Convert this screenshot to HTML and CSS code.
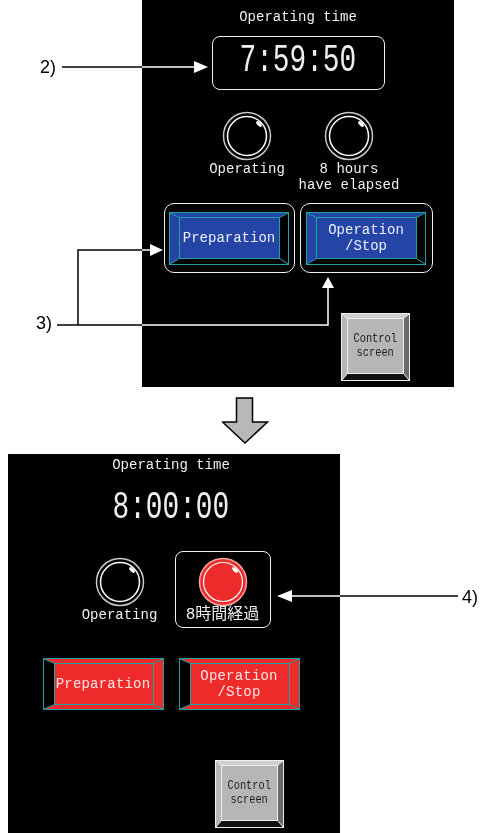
FILE: index.html
```html
<!DOCTYPE html>
<html lang="en">
<head>
    <meta charset="UTF-8">
    <meta name="viewport" content="width=device-width, initial-scale=1.0">
    <title>Operating time screen</title>
    <link rel="stylesheet" href="styles.css">
</head>
<body>

<div class="sheet">

    <!-- Screen before 8 hours -->
    <section class="screen screen--before">
        <div class="caption">Operating time</div>
        <div class="clock clock--boxed"><span class="clock-digits">7:59:50</span></div>

        <div class="lamps">
            <div class="lamp-cell">
                <svg class="lamp" width="50" height="50" viewBox="0 0 50 50">
                    <circle cx="25" cy="25" r="23.5" fill="none" stroke="#c8c8c8" stroke-width="1.5"/>
                    <circle cx="25" cy="25" r="19.5" fill="none" stroke="#fff" stroke-width="1.5"/>
                    <ellipse cx="37" cy="13" rx="1.8" ry="3.6" transform="rotate(-45 37 13)" fill="#fff"/>
                </svg>
                <div class="lamp-label">Operating</div>
            </div>
            <div class="lamp-cell">
                <svg class="lamp" width="50" height="50" viewBox="0 0 50 50">
                    <circle cx="25" cy="25" r="23.5" fill="none" stroke="#c8c8c8" stroke-width="1.5"/>
                    <circle cx="25" cy="25" r="19.5" fill="none" stroke="#fff" stroke-width="1.5"/>
                    <ellipse cx="37" cy="13" rx="1.8" ry="3.6" transform="rotate(-45 37 13)" fill="#fff"/>
                </svg>
                <div class="lamp-label">8 hours<br>have elapsed</div>
            </div>
        </div>

        <div class="switches">
            <div class="switch-frame">
                <div class="bevel bevel--blue">
                    <svg class="bevel-art" width="120" height="53" viewBox="0 0 120 53">
                        <rect width="120" height="53" fill="#2445a6"/>
                        <polygon points="120,0 120,53 110.5,46.5 110.5,5.5" fill="#000"/>
                        <polygon points="0,53 10.5,46.5 110.5,46.5 120,53" fill="#000"/>
                        <g stroke="#1fa3a3" fill="none">
                            <rect x=".5" y=".5" width="119" height="52"/>
                            <rect x="10.5" y="5.5" width="100" height="41"/>
                            <path d="M1 1 10.5 5.5M119 1 110.5 5.5M1 52 10.5 46.5M119 52 110.5 46.5"/>
                        </g>
                    </svg>
                    <span class="bevel-text">Preparation</span>
                </div>
            </div>
            <div class="switch-frame switch-frame--wide">
                <div class="bevel bevel--blue">
                    <svg class="bevel-art" width="120" height="53" viewBox="0 0 120 53">
                        <rect width="120" height="53" fill="#2445a6"/>
                        <polygon points="120,0 120,53 110.5,46.5 110.5,5.5" fill="#000"/>
                        <polygon points="0,53 10.5,46.5 110.5,46.5 120,53" fill="#000"/>
                        <g stroke="#1fa3a3" fill="none">
                            <rect x=".5" y=".5" width="119" height="52"/>
                            <rect x="10.5" y="5.5" width="100" height="41"/>
                            <path d="M1 1 10.5 5.5M119 1 110.5 5.5M1 52 10.5 46.5M119 52 110.5 46.5"/>
                        </g>
                    </svg>
                    <span class="bevel-text">Operation<br>/Stop</span>
                </div>
            </div>
        </div>

        <div class="bevel ctrl ctrl--before">
            <svg class="bevel-art" width="69" height="68" viewBox="0 0 69 68">
                <rect width="69" height="68" fill="#b6b6b6"/>
                <polygon points="0,0 69,0 63,5 6,5" fill="#cfcfcf"/>
                <polygon points="69,0 69,68 63,61 63,5" fill="#6a6a6a"/>
                <polygon points="0,68 6,61 63,61 69,68" fill="#111"/>
                <g stroke="#eee" fill="none">
                    <rect x=".5" y=".5" width="68" height="67"/>
                    <rect x="6.5" y="5.5" width="56" height="55"/>
                    <path d="M1 1 6.5 5.5M68 1 62.5 5.5M1 67 6.5 60.5M68 67 62.5 60.5"/>
                </g>
            </svg>
            <span class="bevel-text ctrl-text">Control<br>screen</span>
        </div>
    </section>

    <svg class="down-arrow" width="48" height="48" viewBox="0 0 48 48">
        <polygon points="14.5,1 30.5,1 30.5,25 45.5,25 23,46 0.5,25 14.5,25" fill="#b8b8b8" stroke="#000" stroke-width="1.5" stroke-linejoin="miter"/>
    </svg>

    <!-- Screen after 8 hours -->
    <section class="screen screen--after">
        <div class="caption">Operating time</div>
        <div class="clock clock--plain"><span class="clock-digits">8:00:00</span></div>

        <div class="lamps lamps--after">
            <div class="lamp-cell lamp-cell--narrow">
                <svg class="lamp" width="50" height="50" viewBox="0 0 50 50">
                    <circle cx="25" cy="25" r="23.5" fill="none" stroke="#c8c8c8" stroke-width="1.5"/>
                    <circle cx="25" cy="25" r="19.5" fill="none" stroke="#fff" stroke-width="1.5"/>
                    <ellipse cx="37" cy="13" rx="1.8" ry="3.6" transform="rotate(-45 37 13)" fill="#fff"/>
                </svg>
                <div class="lamp-label">Operating</div>
            </div>
            <div class="lamp-frame">
                <svg class="lamp" width="50" height="50" viewBox="0 0 50 50">
                    <circle cx="25" cy="25" r="23.5" fill="#ee2b2b" stroke="#f4a3a3" stroke-width="1.5"/>
                    <circle cx="25" cy="25" r="19.5" fill="#ee2b2b" stroke="#fff" stroke-width="1.2"/>
                    <ellipse cx="37" cy="13" rx="1.8" ry="3.6" transform="rotate(-45 37 13)" fill="#fff"/>
                </svg>
                <div class="lamp-label lamp-label--jp">8時間経過</div>
            </div>
        </div>

        <div class="switches switches--after">
            <div class="bevel bevel--red">
                <svg class="bevel-art" width="121" height="52" viewBox="0 0 121 52">
                    <rect width="121" height="52" fill="#ee2a2a"/>
                    <polygon points="0,0 11.5,5.5 11.5,46.5 0,52" fill="#000"/>
                    <g stroke="#1fa3a3" fill="none">
                        <rect x=".5" y=".5" width="120" height="51"/>
                        <rect x="11.5" y="5.5" width="99" height="41"/>
                        <path d="M1 1 11.5 5.5M120 1 110.5 5.5M1 51 11.5 46.5M120 51 110.5 46.5"/>
                    </g>
                </svg>
                <span class="bevel-text">Preparation</span>
            </div>
            <div class="bevel bevel--red">
                <svg class="bevel-art" width="121" height="52" viewBox="0 0 121 52">
                    <rect width="121" height="52" fill="#ee2a2a"/>
                    <polygon points="0,0 11.5,5.5 11.5,46.5 0,52" fill="#000"/>
                    <g stroke="#1fa3a3" fill="none">
                        <rect x=".5" y=".5" width="120" height="51"/>
                        <rect x="11.5" y="5.5" width="99" height="41"/>
                        <path d="M1 1 11.5 5.5M120 1 110.5 5.5M1 51 11.5 46.5M120 51 110.5 46.5"/>
                    </g>
                </svg>
                <span class="bevel-text">Operation<br>/Stop</span>
            </div>
        </div>

        <div class="bevel ctrl ctrl--after">
            <svg class="bevel-art" width="69" height="68" viewBox="0 0 69 68">
                <rect width="69" height="68" fill="#b6b6b6"/>
                <polygon points="0,0 69,0 63,5 6,5" fill="#cfcfcf"/>
                <polygon points="69,0 69,68 63,61 63,5" fill="#6a6a6a"/>
                <polygon points="0,68 6,61 63,61 69,68" fill="#111"/>
                <g stroke="#eee" fill="none">
                    <rect x=".5" y=".5" width="68" height="67"/>
                    <rect x="6.5" y="5.5" width="56" height="55"/>
                    <path d="M1 1 6.5 5.5M68 1 62.5 5.5M1 67 6.5 60.5M68 67 62.5 60.5"/>
                </g>
            </svg>
            <span class="bevel-text ctrl-text">Control<br>screen</span>
        </div>
    </section>

    <!-- Callout lines: white on the screens, black on the paper -->
    <svg class="callouts" width="480" height="833" viewBox="0 0 480 833">
        <g stroke="#fff" stroke-width="1.5" fill="none">
            <path d="M62 67H196"/>
            <path d="M57 325H328V288"/>
            <path d="M78 325V250H152"/>
            <path d="M292 596H458"/>
        </g>
        <g fill="#fff">
            <polygon points="194,61 208,67 194,73"/>
            <polygon points="322,288 328,277 334,288"/>
            <polygon points="150,244 163,250 150,256"/>
            <polygon points="292,590 277,596 292,602"/>
        </g>
    </svg>
    <span class="tag tag--2">2)</span>
    <span class="tag tag--3">3)</span>
    <span class="tag tag--4">4)</span>

</div>

</body>
</html>
```

FILE: styles.css
```css
body {
    margin: 0;
    background: #fff;
    font-family: "Liberation Mono", "DejaVu Sans Mono", monospace;
}

.sheet {
    position: relative;
    width: 480px;
    height: 833px;
    overflow: hidden;
}

/* PLC screens */
.screen {
    box-sizing: border-box;
    display: flex;
    flex-direction: column;
    align-items: center;
    background: #000;
    color: #efefef;
    font-size: 14px;
    line-height: 16px;
}

.screen--before {
    margin-left: 142px;
    width: 312px;
    height: 387px;
    padding-top: 9px;
}

.screen--after {
    margin-top: 9px;
    margin-left: 8px;
    width: 332px;
    height: 380px;
    padding: 3px 6px 0 0;
}

.caption {
    white-space: nowrap;
}

.clock {
    box-sizing: border-box;
    display: flex;
    justify-content: center;
    width: 173px;
    height: 54px;
    margin-top: 11px;
    border: 1.5px solid transparent;
    border-radius: 8px;
    font-size: 38px;
    line-height: 48px;
}

.clock--boxed {
    border-color: #efefef;
}

.clock--plain {
    margin-top: 10px;
}

.clock-digits {
    display: inline-block;
    white-space: nowrap;
    transform: scaleX(0.73);
}

/* lamps */
.lamps {
    display: flex;
    align-items: flex-start;
    gap: 2px;
    margin-top: 21px;
}

.lamps--after {
    gap: 7px;
    margin-top: 14px;
}

.lamp-cell {
    display: flex;
    flex-direction: column;
    align-items: center;
    width: 100px;
    text-align: center;
}

.lamp-cell--narrow {
    width: 96px;
    padding-top: 6px;
}

.lamp-frame {
    box-sizing: border-box;
    display: flex;
    flex-direction: column;
    align-items: center;
    width: 96px;
    padding: 4.5px 0;
    border: 1.5px solid #efefef;
    border-radius: 8px;
}

.lamp {
    display: block;
}

.lamp-label {
    white-space: nowrap;
}

.lamp-label--jp {
    font-family: "Liberation Mono", "Noto Sans CJK JP", monospace;
    font-size: 16px;
}

/* switches */
.switches {
    display: flex;
    gap: 5px;
    margin-top: 10px;
}

.switches--after {
    gap: 15px;
    margin-top: 30px;
}

.switch-frame {
    box-sizing: border-box;
    display: flex;
    align-items: center;
    justify-content: center;
    width: 131px;
    height: 70px;
    border: 1.5px solid #efefef;
    border-radius: 10px;
}

.switch-frame--wide {
    width: 133px;
}

.bevel {
    position: relative;
    display: flex;
    align-items: center;
    justify-content: center;
    text-align: center;
}

.bevel-art {
    position: absolute;
    left: 0;
    top: 0;
}

.bevel-text {
    position: relative;
    white-space: nowrap;
}

.bevel--blue {
    width: 120px;
    height: 53px;
    color: #eef0ff;
}

.bevel--red {
    width: 121px;
    height: 52px;
    color: #ffe6e6;
    letter-spacing: 0.2px;
}

.ctrl {
    align-self: flex-end;
    width: 69px;
    height: 68px;
}

.ctrl--before {
    margin-top: 40px;
    margin-right: 44px;
}

.ctrl--after {
    margin-top: 50px;
    margin-right: 50px;
}

.ctrl-text {
    display: inline-block;
    color: #1c1c1c;
    font-size: 12px;
    line-height: 13.6px;
    transform: scaleX(0.86);
}

.down-arrow {
    display: block;
    margin: 10px 0 0 222px;
}

/* callouts */
.callouts {
    position: absolute;
    left: 0;
    top: 0;
    mix-blend-mode: difference;
    pointer-events: none;
}

.tag {
    position: absolute;
    color: #000;
    font-family: "Liberation Sans", Arial, sans-serif;
    font-size: 18px;
    line-height: 18px;
}

.tag--2 { left: 40px; top: 58px; }
.tag--3 { left: 36px; top: 314px; }
.tag--4 { left: 462px; top: 588px; }
```
